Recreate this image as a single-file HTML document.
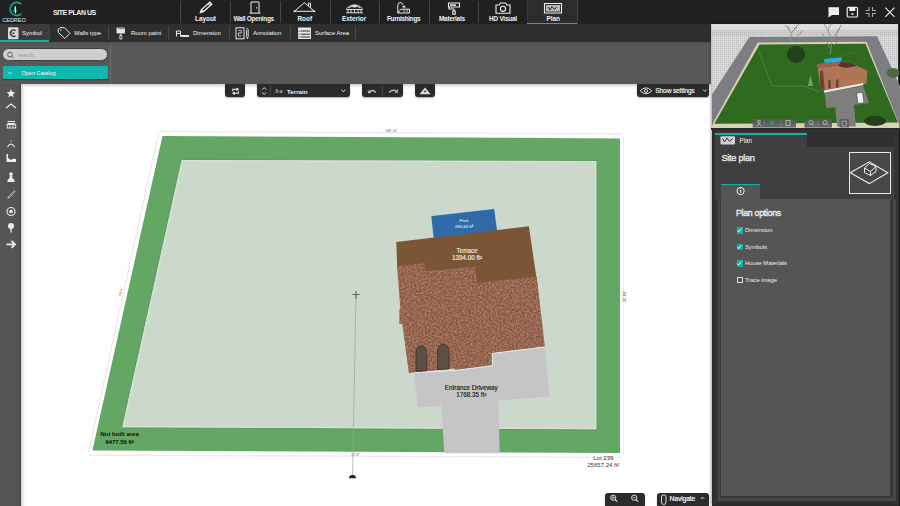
<!DOCTYPE html>
<html><head><meta charset="utf-8">
<style>
*{margin:0;padding:0;box-sizing:border-box}
html,body{width:900px;height:506px;overflow:hidden;background:#fff;font-family:"Liberation Sans",sans-serif;color:#fff}
.abs{position:absolute}
#top{left:0;top:0;width:900px;height:24px;background:#202020}
#bar2{left:0;top:24px;width:711px;height:17.5px;background:#2e2e2e}
#gpanel{left:0;top:41.5px;width:711px;height:42.5px;background:#585858}
#sidebar{left:0;top:84px;width:21px;height:422px;background:#555}
#canvas{left:21.4px;top:83.7px;width:690px;height:423px;background:#fff;box-shadow:inset 2px 2px 2.5px rgba(0,0,0,0.18)}
#rpanel{left:711.5px;top:24px;width:188.5px;height:482px;background:#3a3a3a;box-shadow:-1.5px 0 2.5px rgba(0,0,0,0.35)}
.tl{position:absolute;top:15px;line-height:7px;font-size:6.4px;font-weight:bold;white-space:nowrap;color:#f2f2f2}
.sep{position:absolute;width:1px;background:#484848}
.t2{position:absolute;top:6px;font-size:6px;font-weight:normal;line-height:7px;white-space:nowrap;color:#f2f2f2;letter-spacing:-0.05px}
svg{position:absolute;overflow:visible}
.chk{width:6.5px;height:6.5px;border:1px solid #ddd;background:transparent}
.chk.on{background:#14b3a9;border-color:#14b3a9}
.cl{font-size:5.8px;line-height:7px;color:#eee;white-space:nowrap}
.btn{background:#2b2b2b;border-radius:0 0 3px 3px;box-shadow:0 1px 1.5px rgba(0,0,0,0.35)}
</style></head>
<body>
<!-- TOP BAR -->
<div id="top" class="abs">
  <div class="tl" style="left:53px;top:9px;font-size:7px;line-height:8px;letter-spacing:-0.45px">SITE PLAN US</div>
  <div class="abs" style="left:527px;top:0;width:51px;height:24px;background:#2c2c2c;border-left:1px solid #3a3a3a;border-right:1px solid #444"></div>
  <div class="abs" style="left:527px;top:23px;width:50px;height:1.5px;background:#14b3a9"></div>
  <div class="sep" style="left:180px;top:1px;height:22px"></div>
  <div class="sep" style="left:230px;top:1px;height:22px"></div>
  <div class="sep" style="left:280px;top:1px;height:22px"></div>
  <div class="sep" style="left:330px;top:1px;height:22px"></div>
  <div class="sep" style="left:379px;top:1px;height:22px"></div>
  <div class="sep" style="left:429px;top:1px;height:22px"></div>
  <div class="sep" style="left:478px;top:1px;height:22px"></div>
  <div class="tl" style="left:195px">Layout</div>
  <div class="tl" style="left:233.5px;letter-spacing:-0.3px">Wall Openings</div>
  <div class="tl" style="left:297.5px">Roof</div>
  <div class="tl" style="left:342px">Exterior</div>
  <div class="tl" style="left:387px;letter-spacing:-0.3px">Furnishings</div>
  <div class="tl" style="left:439px;letter-spacing:-0.2px">Materials</div>
  <div class="tl" style="left:489px;letter-spacing:-0.2px">HD Visual</div>
  <div class="tl" style="left:546.5px">Plan</div>
</div>
<svg style="left:0;top:0" width="900" height="24" viewBox="0 0 900 24" fill="none" stroke="#eee" stroke-width="0.9">
  <!-- logo -->
  <path d="M21.2,4.2 A6.6,6.6 0 1 0 21.4,13.6" stroke="#1aa386" stroke-width="1.6"/>
  <path d="M15,5 L13,12 L17,12 Z" fill="#1aa386" stroke="none"/>
  <path d="M15.5,6.5 L15.5,13.5" stroke="#f0e0e8" stroke-width="1.1"/>
  <text x="14" y="22.3" font-size="5.6" fill="#e8e8e8" stroke="none" text-anchor="middle" font-family="Liberation Sans" letter-spacing="-0.1">CEDREO</text>
  <!-- layout pencil -->
  <path d="M200.5,12.5 L201.5,9.6 L209.8,2.2 L211.8,4.3 L203.5,11.6 Z M201.5,9.6 L203.5,11.6 M208.4,3.6 L210.4,5.7" stroke-width="1.3"/>
  <!-- door -->
  <path d="M251,13 V2 H259 V13 M249.5,13.1 H260.5 M256.6,7.2 V8.6" stroke-width="1"/>
  <!-- roof -->
  <path d="M294.5,11.3 L304.4,2.6 L314.4,11.3 M294,11.3 H315 M308.5,6 V3.2 H310.5 V7.8" stroke-width="1"/>
  <circle cx="294.3" cy="11.3" r="0.9" fill="#eee" stroke="none"/><circle cx="314.5" cy="11.3" r="0.9" fill="#eee" stroke="none"/>
  <!-- exterior -->
  <path d="M346.5,8.5 Q354.5,1 362.5,8.5 M349,8 Q354.5,3.5 360,8 M346,9.5 H363 M346,12.8 H363 M348,9.5 V12.8 M351,9.5 V12.8 M354.5,9.5 V12.8 M358,9.5 V12.8 M361,9.5 V12.8" stroke-width="0.9"/>
  <rect x="352.5" y="5.3" width="4" height="2" fill="#eee" stroke="none"/>
  <!-- furnishings -->
  <path d="M397.8,13 V5.5 Q397.8,2.5 400.2,2.5 Q402.5,2.5 402.5,5 M397.8,13 H409.5 V9.2 H401 Z" stroke-width="1"/>
  <path d="M402,7.5 L404,5 L406,7.5 Z" fill="#eee" stroke="none"/>
  <circle cx="404" cy="11" r="0.8" fill="#eee" stroke="none"/><circle cx="407" cy="11" r="0.8" fill="#eee" stroke="none"/>
  <!-- materials roller -->
  <path d="M448.5,3 H459.5 V7 H448.5 Z M449,7.5 V9 H454 V11 M452.8,11 H455.2 V14.2 H452.8 Z" stroke-width="1.1"/>
  <rect x="450" y="4.3" width="6" height="1.5" fill="#eee" stroke="none"/>
  <!-- camera -->
  <path d="M496,5 H499 L500.5,3 H505.5 L507,5 H510 V13.2 H496 Z" stroke-width="1.1"/>
  <circle cx="503" cy="8.8" r="2.6" stroke-width="1.1"/>
  <!-- plan icon -->
  <path d="M544.5,3.5 H561.5 V13 H544.5 Z" stroke-width="1.1"/>
  <rect x="546" y="5" width="14" height="6.5" fill="#bbb" stroke="none"/>
  <path d="M548,7 L550,10 L552,6.5 L554.5,9.5 L557,6.8" stroke="#222" stroke-width="1"/>
  <!-- right icons -->
  <path d="M828.5,7.3 H839 V15 H832 L828.5,17.5 Z" fill="#eee" stroke="none"/>
  <rect x="831" y="9.5" width="4.5" height="1" fill="#444"/>
  <rect x="847.2" y="7.3" width="10.3" height="9.7" rx="1.3" stroke-width="1.2"/>
  <rect x="849.3" y="8" width="6" height="3" fill="#eee" stroke="none"/>
  <circle cx="852.4" cy="14" r="1.1" fill="#eee" stroke="none"/>
  <path d="M865.5,10.5 H869 V7 M872.5,7 V10.5 H876 M865.5,13.5 H869 V17 M872.5,17 V13.5 H876" stroke="#aaa" stroke-width="1.1"/>
  <path d="M885.3,7.6 L894.5,16.8 M894.5,7.6 L885.3,16.8" stroke-width="1.1"/>
</svg>
<!-- SECOND BAR -->
<div id="bar2" class="abs">
  <div class="abs" style="left:0;top:0;width:49px;height:17px;background:#3b3b3b"></div>
  <div class="abs" style="left:0;top:16px;width:49px;height:1.5px;background:#14b3a9"></div>
  <div class="t2" style="left:22px">Symbol</div>
  <div class="sep" style="left:49px;top:2px;height:13px"></div>
  <div class="t2" style="left:74px">Walls type</div>
  <div class="sep" style="left:108px;top:2px;height:13px"></div>
  <div class="t2" style="left:131px">Room paint</div>
  <div class="sep" style="left:168px;top:2px;height:13px"></div>
  <div class="t2" style="left:193px">Dimension</div>
  <div class="sep" style="left:228.5px;top:2px;height:13px"></div>
  <div class="t2" style="left:253px">Annotation</div>
  <div class="sep" style="left:289.5px;top:2px;height:13px"></div>
  <div class="t2" style="left:315px">Surface Area</div>
  <div class="sep" style="left:355px;top:2px;height:13px"></div>
</div>
<svg style="left:0;top:0" width="900" height="45" viewBox="0 0 900 45" fill="none" stroke="#e6e6e6" stroke-width="0.9">
  <!-- symbol -->
  <rect x="8" y="27.2" width="10.5" height="12" rx="1" fill="#d6d6d6" stroke="none"/>
  <path d="M15.6,30.6 A3.2,3.2 0 1 0 15.6,35.8" stroke="#333" stroke-width="1.4"/>
  <circle cx="13.3" cy="33.2" r="1" fill="#333" stroke="none"/>
  <!-- tag -->
  <path d="M58,29.5 L60.5,27.5 L64.5,27.8 L70,33.3 L64.8,38.5 L58.5,32.5 Z" stroke-width="1"/>
  <circle cx="60.8" cy="30" r="0.8" fill="#e6e6e6" stroke="none"/>
  <!-- room paint -->
  <rect x="116.5" y="27.5" width="8.5" height="6" rx="1" fill="#e6e6e6" stroke="none"/>
  <path d="M118,29 L119.5,27.8 L121,29 M121.5,29 L123,27.8 L124.5,29" stroke="#333" stroke-width="0.8"/>
  <path d="M120.8,33.5 V35.5 M119.8,35.5 H121.8 V39 H119.8 Z" stroke-width="0.9"/>
  <!-- dimension -->
  <path d="M176.5,36.5 V31 H180.5 V36.5 M176.5,33.5 H180.5" stroke-width="1"/>
  <rect x="181" y="35" width="8" height="2" fill="#e6e6e6" stroke="none"/>
  <!-- annotation -->
  <rect x="236" y="27.8" width="8" height="11" stroke-width="1"/>
  <path d="M238.5,30.5 H241.2 V33 H238.5 V36 H241.5" stroke-width="0.8"/>
  <path d="M246.5,28.5 Q248.2,28.5 248.2,30 V36.5 L247.4,38.8 L246.6,36.5 V30" stroke-width="0.9"/>
  <!-- surface area -->
  <rect x="298" y="27.5" width="13" height="11.5" fill="#e6e6e6" stroke="none"/>
  <path d="M300.5,31 H310 M300.5,34.2 H310 M300.5,37 H310" stroke="#333" stroke-width="1"/>
  <path d="M299,30.5 V32 M299,33.5 V35 M299,36.3 V37.8" stroke="#333" stroke-width="0.7"/>
</svg>
<!-- GREY PANEL -->
<div id="gpanel" class="abs">
  <div class="abs" style="left:110px;top:1px;width:1px;height:42px;background:#6e6e6e"></div>
  <div class="abs" style="left:0;top:0;width:711px;height:4px;background:linear-gradient(rgba(0,0,0,0.1),rgba(0,0,0,0))"></div>
  <div class="abs" style="left:2.3px;top:6.6px;width:106px;height:13px;border-radius:6.5px;background:#cfcfcf;border:1px solid #404040"></div>
  <div class="abs" style="left:18px;top:10.5px;font-size:5px;line-height:6px;color:#9a9a9a">search...</div>
  <div class="abs" style="left:3px;top:24.4px;width:105px;height:13px;background:#0fb8ae;box-shadow:0 1px 1px #3a3a3a"></div>
  <div class="abs" style="left:21.5px;top:28.5px;font-size:5.5px;line-height:6px;color:#f4f4f4">Open Catalog</div>
  <svg style="left:0;top:0" width="120" height="45" viewBox="0 0 120 45" fill="none" stroke="#555" stroke-width="0.9"><circle cx="10" cy="12.6" r="2.4"/><path d="M11.8,14.4 L13.6,16.2"/><path d="M8.6,30.3 L10.2,31.9 L11.8,30.3" stroke="#eee"/></svg>
</div>
<!-- SIDEBAR -->
<div id="sidebar" class="abs">
  <div class="abs" style="left:17px;top:0;width:4.5px;height:422px;background:linear-gradient(90deg,rgba(0,0,0,0) 0%,rgba(0,0,0,0.18) 100%)"></div>
</div>
<div id="canvas" class="abs"></div>
<svg style="left:0;top:84px" width="22" height="180" viewBox="0 84 22 180" fill="none" stroke="#eee" stroke-width="1">
  <path d="M11,89 L12.2,92 L15.3,92.2 L12.9,94.2 L13.7,97.4 L11,95.6 L8.3,97.4 L9.1,94.2 L6.7,92.2 L9.8,92 Z" fill="#f2f2f2" stroke="none"/>
  <path d="M6,108 L11,104 L16,108" stroke-width="1.1"/>
  <path d="M7.5,121.5 H15 M7.5,123.5 H15" stroke-width="1.2"/>
  <rect x="7.2" y="124.5" width="8.5" height="3.5" stroke-width="0.9"/>
  <path d="M10,124.5 V128 M13,124.5 V128" stroke-width="0.8"/>
  <path d="M7.5,147 Q11,141 14.5,147" stroke-width="1.1"/><circle cx="11" cy="141" r="0.7" fill="#eee" stroke="none"/>
  <path d="M6.5,154 V162 H16 V159 Q13,158 11,160 L8,158 V154" fill="#eee" stroke="none"/>
  <circle cx="11" cy="174" r="1.8" fill="#eee" stroke="none"/>
  <path d="M9.7,175.5 V178 L7.5,180 V182 H14.5 V180 L12.3,178 V175.5 Z" fill="#eee" stroke="none"/>
  <path d="M8,197.5 L14.5,190.5 M9,198 L15.5,191" stroke-width="0.8" stroke="#ccc"/>
  <path d="M7.5,198.5 L8,196.5 L9.5,198 Z" fill="#ccc" stroke="none"/>
  <circle cx="11" cy="211.5" r="4" stroke-width="1.1"/><circle cx="11" cy="211.5" r="1.8" fill="#eee" stroke="none"/>
  <circle cx="11" cy="226" r="3" fill="#eee" stroke="none"/><path d="M11,228 V232.5" stroke-width="1.3"/>
  <path d="M6.5,244.3 H14.5 M11.5,240.8 L15,244.3 L11.5,247.8" stroke-width="1.8"/>
</svg>
<svg style="left:0;top:0" width="900" height="506" viewBox="0 0 900 506" font-family="Liberation Sans">
  <defs>
    <filter id="rooftex" x="0" y="0" width="100%" height="100%">
      <feTurbulence type="fractalNoise" baseFrequency="0.55" numOctaves="2" seed="7" result="n"/>
      <feColorMatrix in="n" type="matrix" values="0 0 0 0 0.66  0 0 0 0 0.44  0 0 0 0 0.34  0 0 0 0.85 -0.3" result="c"/>
      <feComposite in="c" in2="SourceGraphic" operator="in" result="cc"/>
      <feMerge><feMergeNode in="SourceGraphic"/><feMergeNode in="cc"/></feMerge>
    </filter>
  </defs>
  <!-- dimension lines -->
  <polyline points="160,131.5 622,134" fill="none" stroke="#ececec" stroke-width="1.3"/>
  <polyline points="158.3,134 88.5,452" fill="none" stroke="#ececec" stroke-width="1.3"/>
  <polyline points="623.5,137 623.5,455" fill="none" stroke="#ececec" stroke-width="1.3"/>
  <polyline points="89,455 622,457.5" fill="none" stroke="#ececec" stroke-width="1.3"/>
  <!-- lot -->
  <polygon points="162.5,136 620,138.4 620,453 92.4,450.5" fill="#64a765"/>
  <polygon points="181,159.4 597,160.4 597,430 121.5,427.7" fill="#cdd8cd" stroke="#5d9f60" stroke-width="1.4"/>
  <polygon points="182.6,160.7 595.7,161.7 595.7,428.7 123.1,426.5" fill="none" stroke="#d8e0d6" stroke-width="1.3"/>
  <!-- pool -->
  <polygon points="430.8,215.8 494.5,208.5 498,234 433.5,240" fill="#2f6ba8" stroke="#e9eeea" stroke-width="0.6"/>
  <!-- terrace -->
  <polygon points="396.3,241.9 528.9,226.2 537.5,285 401,285 397.2,268" fill="#7b5636"/>
  <!-- roof -->
  <polygon points="397.1,266 424.7,263.3 425.6,271.3 475.3,266.4 477.1,282.9 536.7,276.7 544.9,346.7 492,353.3 492,365.6 455.2,370.3 454.2,368.4 408.9,373.1 402.3,324 399.4,324 399.4,309 400.4,309" fill="#8b5641" filter="url(#rooftex)"/>
  <!-- driveway -->
  <polygon points="492,353.3 544.9,346.7 549.5,396.4 498.3,400.6 499.7,453.2 444.3,453.2 441.5,406 418,407.5 413.8,372.5 455.2,370.3 492,365.6" fill="#c5c5c5"/>
  <polyline points="413.8,372.7 455.2,370.5 492.3,365.8 492.3,353.5 545,346.9" fill="none" stroke="#e9ece9" stroke-width="0.9"/>
  <!-- windows -->
  <path d="M416,371.5 L416,352 Q416.5,346.5 421.3,345.8 Q426.2,346.5 426.8,352 L426.8,370.6 Z" fill="#5e4f44" stroke="#44372f" stroke-width="1"/>
  <path d="M437.5,369.5 L437.5,351 Q438,345 443.3,344.3 Q448.6,345 449,351 L449,368.8 Z" fill="#5e4f44" stroke="#44372f" stroke-width="1"/>
  <!-- crosshair line -->
  <line x1="356" y1="295" x2="352.6" y2="476" stroke="#9aa29a" stroke-width="0.7"/>
  <line x1="352.5" y1="294.5" x2="359.5" y2="294.5" stroke="#5a5a5a" stroke-width="1"/>
  <line x1="356" y1="291" x2="356" y2="299" stroke="#5a5a5a" stroke-width="1"/>
  <path d="M349,478.3 A3.5,3.3 0 0 1 356,478.3 Z" fill="#222"/>
  <!-- labels -->
  <g fill="#dfe6ef" stroke="#dfe6ef" stroke-width="0.1" text-anchor="middle" font-size="4.3">
    <text x="463.8" y="222.3">Pool</text>
    <text x="464" y="228.2">265.63 ft²</text>
  </g>
  <g fill="#f0ebe6" stroke="#f0ebe6" stroke-width="0.15" text-anchor="middle" font-size="6.3">
    <text x="467" y="253.2">Terrace</text>
    <text x="467" y="260.2">1394.00 ft²</text>
  </g>
  <g fill="#111" stroke="#111" stroke-width="0.12" text-anchor="middle" font-size="6.3">
    <text x="471.3" y="389.5">Entrance Driveway</text>
    <text x="471.3" y="396.5">1768.35 ft²</text>
  </g>
  <g fill="#111" text-anchor="middle" font-size="6" font-weight="bold">
    <text x="119.6" y="436.2">Not built area</text>
    <text x="119.6" y="443.6" font-weight="normal" stroke="#111" stroke-width="0.2" font-size="5.9">6477.56 ft²</text>
  </g>
  <g fill="#333" text-anchor="middle" font-size="6">
    <text x="603.3" y="460.2">Lot 239</text>
    <text x="603.3" y="467.3">25657.24 ft²</text>
  </g>
  <g fill="#666" text-anchor="middle" font-size="3.3">
    <text x="391.5" y="132">188'-10"</text>
    <text x="355.5" y="456">22'-8"</text>
    <text transform="translate(121.8,292) rotate(-77)">58'-6"</text>
    <text transform="translate(623,297) rotate(90)">111'-11"</text>
  </g>
</svg>
<!-- CANVAS TOOLBAR -->
<div class="abs btn" style="left:225px;top:84px;width:20px;height:12.5px"></div>
<div class="abs btn" style="left:257px;top:84px;width:93px;height:12.5px"></div>
<div class="abs btn" style="left:362px;top:84px;width:40.5px;height:12.5px"></div>
<div class="abs btn" style="left:415px;top:84px;width:20px;height:12.5px"></div>
<div class="abs btn" style="left:637px;top:84px;width:71.5px;height:13px"></div>
<div class="abs" style="left:287px;top:88px;font-size:6.2px;line-height:7px;font-weight:bold;color:#eee">Terrain</div>
<div class="abs" style="left:655.3px;top:87px;font-size:6.8px;line-height:8px;font-weight:normal;color:#fff;letter-spacing:-0.25px;-webkit-text-stroke:0.1px #fff">Show settings</div>
<div class="abs btn" style="left:604.5px;top:493px;width:40.5px;height:15px;border-radius:3px"></div>
<div class="abs btn" style="left:656.5px;top:493px;width:52.5px;height:15px;border-radius:3px"></div>
<div class="abs" style="left:669.5px;top:495px;font-size:6.8px;line-height:8px;font-weight:normal;color:#fff;letter-spacing:-0.15px;-webkit-text-stroke:0.15px #fff">Navigate</div>
<svg style="left:0;top:0" width="900" height="506" viewBox="0 0 900 506" fill="none" stroke="#eee" stroke-width="1">
  <!-- swap -->
  <path d="M232.8,91.2 V89.3 H238 M236.6,88 L238.2,89.3 L236.6,90.6 M238.4,91.3 V93.2 H233.2 M234.6,91.9 L233,93.2 L234.6,94.5" stroke-width="1.1"/>
  <!-- up/down -->
  <path d="M262.2,89.6 L264.2,87.6 L266.2,89.6 M262.2,92.4 L264.2,94.4 L266.2,92.4" stroke-width="0.9"/>
  <line x1="270.5" y1="86" x2="270.5" y2="95.5" stroke="#666" stroke-width="0.6"/>
  <text x="274" y="93.3" font-size="5" fill="#ddd" stroke="none" font-family="Liberation Sans">.ft-a</text>
  <path d="M341.6,89.8 L343.5,91.7 L345.4,89.8" stroke-width="1"/>
  <!-- undo redo -->
  <line x1="382.2" y1="85.5" x2="382.2" y2="95.5" stroke="#666" stroke-width="0.6"/>
  <path d="M369,92.5 Q372,88.5 376,92.5" stroke="#bbb" stroke-width="1.3"/>
  <path d="M368.2,90.2 L368.6,93 L371,92.4" stroke="#bbb" stroke-width="1"/>
  <path d="M389,92.5 Q392.5,88.5 397,91.5" stroke="#bbb" stroke-width="1.3"/>
  <path d="M397.5,89.5 L397.4,92.4 L394.8,92.5" stroke="#bbb" stroke-width="1"/>
  <!-- triangle -->
  <path d="M425,87.5 L430.5,94.2 L419.5,94.2 Z" fill="#ddd" stroke="none"/>
  <path d="M423.6,90.8 H426.4 L425,92.8 Z" fill="#2b2b2b" stroke="none"/>
  <!-- eye -->
  <path d="M640.2,90.8 Q646,84.8 651.8,90.8 Q646,96.8 640.2,90.8 Z" stroke-width="0.9"/>
  <circle cx="646" cy="90.8" r="1.6" stroke-width="0.9"/>
  <path d="M703,89.6 L704.8,91.4 L706.6,89.6" stroke-width="0.9"/>
  <!-- zoom icons -->
  <circle cx="613.2" cy="497.7" r="2.6" stroke-width="0.9"/>
  <path d="M615.1,499.6 L617.2,501.7" stroke-width="1.2"/>
  <path d="M611.7,497.7 H614.7 M613.2,496.2 V499.2" stroke-width="0.7"/>
  <circle cx="634.2" cy="497.7" r="2.6" stroke-width="0.9"/>
  <path d="M636.1,499.6 L638.2,501.7" stroke-width="1.2"/>
  <path d="M632.7,497.7 H635.7" stroke-width="0.7"/>
  <!-- hand -->
  <path d="M661.5,502 V497 Q661.5,495 663,495 H664.5 Q666,495 666,497 V502 Q666,504.5 663.7,504.5 Q661.5,504.5 661.5,502 Z" stroke-width="0.9"/>
  <path d="M700.8,499 L702.6,497.2 L704.4,499" stroke-width="0.9"/>
</svg>
<!-- RIGHT PANEL -->
<div id="rpanel" class="abs" style="background:#2b2b2b">
  <div class="abs" style="left:187.3px;top:0;width:1.7px;height:482px;background:#141414"></div>
  <div class="abs" style="left:2.5px;top:106px;width:184.5px;height:373px;background:#333"></div>
  <div class="abs" style="left:95px;top:108.5px;width:87px;height:14px;background:#303030"></div>
  <div class="abs" style="left:3px;top:108.5px;width:92px;height:14.5px;background:#3f3f3f;border-top:2px solid #12b0a8"></div>
  <div class="abs" style="left:3px;top:123px;width:179px;height:51.5px;background:#3f3f3f"></div>
  <div class="abs" style="left:6px;top:174.5px;width:178px;height:302.5px;background:#474747"></div>
  <div class="abs" style="left:8px;top:174.5px;width:173px;height:299px;background:#383838"></div>
  <div class="abs" style="left:6px;top:174.5px;width:178px;height:0.1px;background:#3f3f3f"></div>
  <div class="abs" style="left:9.6px;top:174.5px;width:169.4px;height:297.5px;background:#555"></div>
  <div class="abs" style="left:9.6px;top:159.5px;width:38.9px;height:15px;background:#555;border-top:1.5px solid #12b0a8"></div>
  <div class="abs" style="left:28px;top:112.5px;font-size:6.3px;line-height:7px;color:#eee">Plan</div>
  <div class="abs" style="left:10px;top:128.5px;font-size:9.2px;line-height:10px;color:#f4f4f4;letter-spacing:-0.3px;-webkit-text-stroke:0.25px #f4f4f4">Site plan</div>
  <div class="abs" style="left:24.5px;top:183.5px;font-size:8.8px;line-height:10px;font-weight:normal;color:#f0f0f0;letter-spacing:-0.3px;-webkit-text-stroke:0.35px #f0f0f0">Plan options</div>
  <div class="abs" style="left:137px;top:128px;width:42.5px;height:41.5px;border:1.3px solid #e6e6e6;background:#484848"></div>
  <div class="abs chk on" style="left:25px;top:203px"></div>
  <div class="abs chk on" style="left:25px;top:219.5px"></div>
  <div class="abs chk on" style="left:25px;top:236px"></div>
  <div class="abs chk" style="left:25px;top:252.5px"></div>
  <div class="abs cl" style="left:33.5px;top:203px">Dimension</div>
  <div class="abs cl" style="left:33.5px;top:219.5px">Symbols</div>
  <div class="abs cl" style="left:33.5px;top:236px">House Materials</div>
  <div class="abs cl" style="left:33.5px;top:252.5px">Trace image</div>
</div>
<svg style="left:0;top:0" width="900" height="300" viewBox="0 0 900 300" fill="none" stroke="#eee" stroke-width="1">
  <rect x="720.5" y="136.2" width="14.5" height="8.3" rx="1" fill="#cfcfcf" stroke="none"/>
  <path d="M722.5,138.5 L724.5,142 L727,138 L729.5,141.5 L732.5,138.5" stroke="#333" stroke-width="1"/>
  <path d="M850.3,172.7 L869.3,161.8 L887.8,172.7 L869.3,183.6 Z" stroke-width="1.1"/>
  <path d="M864.5,168 L869.5,163.5 L876,166.5 V171.5 L870.5,175.5 L864.5,172.5 Z M864.5,168 L870.5,171.5 L876,166.5 M870.5,171.5 V175.5" stroke-width="1"/>
  <circle cx="740.6" cy="191" r="3.6" stroke-width="1"/>
  <path d="M740.6,189.8 V192.8" stroke-width="1"/><circle cx="740.6" cy="188.6" r="0.5" fill="#eee" stroke="none"/>
  <g stroke="#fff" stroke-width="0.9">
    <path d="M737.2,230.5 L738.6,232 L741.2,228.8"/>
    <path d="M737.2,247 L738.6,248.5 L741.2,245.3"/>
    <path d="M737.2,263.5 L738.6,265 L741.2,261.8"/>
  </g>
</svg>
<!-- 3D VIEW -->
<svg style="left:712px;top:24px" width="186" height="103.5" viewBox="712 24 186 103.5">
  <defs>
    <pattern id="pave" width="2" height="2" patternUnits="userSpaceOnUse">
      <rect width="2" height="2" fill="#d9d9d9"/>
      <rect width="1" height="1" fill="#bdbdbd"/>
    </pattern>
    <filter id="blur1"><feGaussianBlur stdDeviation="0.6"/></filter>
  </defs>
  <rect x="712" y="24" width="186" height="103.5" fill="url(#pave)"/>
  <rect x="712" y="24" width="186" height="6" fill="#e2e2e2" opacity="0.6"/>
  <!-- sidewalk -->
  <polygon points="749.4,37 877,36.3 900,86 900,128 712,128 712,94.5" fill="#7d7d84"/>
  <!-- cream border -->
  <polygon points="757.8,42.5 866.5,41.8 899,124 899,128 712,128 712,126 713.5,122" fill="#d9d2b4"/>
  <!-- lawn -->
  <polygon points="759.5,44.6 865.5,43.8 898,122.5 714.3,123.8" fill="#2f6a1f"/>
  <!-- lawn light paths -->
  <polyline points="758.5,50.5 772,86 804,86 820,92" fill="none" stroke="#4b8a3a" stroke-width="0.9"/>
  <polyline points="840,56 853,52 868,60" fill="none" stroke="#3f7d31" stroke-width="0.6"/>
  <!-- dark tree -->
  <ellipse cx="796" cy="54.5" rx="9" ry="8.5" fill="#23401a" filter="url(#blur1)"/>
  <ellipse cx="893" cy="73" rx="6.5" ry="5" fill="#4e6b45" filter="url(#blur1)"/>
  <ellipse cx="875" cy="121" rx="11" ry="5" fill="#23401a" filter="url(#blur1)"/>
  <!-- leafless trees -->
  <g stroke="#8d8d86" stroke-width="1" fill="none" filter="url(#blur1)" opacity="0.9">
    <path d="M830,55 L832,42 L828,30 L824,24 M832,42 L838,32 L841,25 M830,48 L825,38 L822,33 M835,36 L839,28 M828,30 L831,24 M834,45 L840,40"/>
    <path d="M792,42 L791,33 L788,26 M791,33 L797,27 M789,30 L785,25 M794,29 L799,24 M797,36 L803,31"/>
  </g>
  <rect x="712" y="30" width="186" height="6" fill="#a9a9a9" opacity="0.18"/>
  <!-- driveway -->
  <polygon points="824.7,92.5 863.2,86 869,103.2 854,104.8 855.8,126.5 837,126.5 835.3,107.3 826.3,108.1" fill="#7e7e7e"/>
  <polygon points="856.6,93 862.5,92.3 864,102.8 857.8,103.4" fill="#f2f2f2" stroke="#222" stroke-width="0.5"/>
  <!-- house -->
  <polygon points="817.3,63.9 844.3,61.4 850.9,63 867.3,70.4 866.5,83.5 824.7,92.5 819.8,86" fill="#b07556"/>
  <polygon points="841,61.5 850.9,63 857,66 846,68 838,66" fill="#5a3328"/>
  <polygon points="817.3,63.9 841,61.5 838,66 819,68" fill="#9a6048"/>
  <polygon points="819.8,71 823,70.5 825,92.5 819.8,86" fill="#6b4536"/>
  <polygon points="823.9,90.5 863.2,83 863.2,85.3 824,92.8" fill="#ebe6df"/>
  <path d="M829.5,80 V88.4 M837.3,79.5 V87.8" stroke="#5c3e30" stroke-width="2.2"/>
  <!-- pool -->
  <polygon points="823.9,58.9 841.9,57.3 841.4,61.4 824.7,63" fill="#25aee4"/>
  <path d="M808,86 L810.5,75 L813,86" fill="#8fae86" opacity="0.8"/>
  <!-- toolbar -->
  <g fill="#5a5a5f" opacity="0.9">
    <rect x="752.7" y="119" width="43.3" height="8.5"/>
    <rect x="804.4" y="119" width="27.5" height="8.5"/>
    <rect x="839.6" y="119" width="9.4" height="8.5"/>
  </g>
  <g stroke="#cfcfcf" stroke-width="0.7" fill="none">
    <circle cx="759" cy="121.6" r="1.4"/><path d="M757,126 L759,123.5 L761,126"/>
    <line x1="764" y1="120.5" x2="764" y2="126.5" stroke="#888"/>
    <line x1="781" y1="120.5" x2="781" y2="126.5" stroke="#888"/>
    <rect x="786" y="120.5" width="4" height="5"/>
    <circle cx="811" cy="122.5" r="2"/><line x1="812.5" y1="124" x2="814" y2="125.5"/>
    <line x1="818" y1="120.5" x2="818" y2="126.5" stroke="#888"/>
    <circle cx="825" cy="122.5" r="2"/><line x1="826.5" y1="124" x2="828" y2="125.5"/>
    <rect x="842" y="121" width="4.5" height="5" rx="1.5"/>
  </g>
  <circle cx="772" cy="123" r="2.5" fill="#3d8a7a"/>
</svg>
<div class="abs" style="left:711px;top:127.5px;width:189px;height:2.5px;background:#2a2a2a"></div>
</body></html>
